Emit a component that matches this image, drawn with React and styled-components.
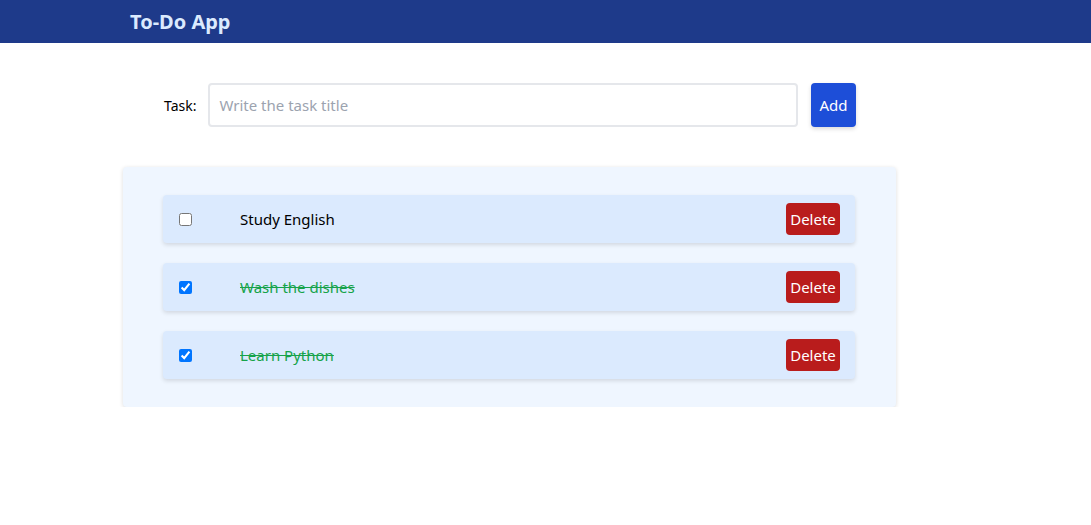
import React, { useState } from "react";
import styled, { createGlobalStyle } from "styled-components";

const GlobalStyle = createGlobalStyle`
    body {
        margin: 0;
        font-family: "Noto Sans", "Open Sans", sans-serif;
        background: #ffffff;
        color: #000000;
    }
    * { box-sizing: border-box; }
`;

const initialTasks = [
    { id: 1, title: "Study English", done: false },
    { id: 2, title: "Wash the dishes", done: true },
    { id: 3, title: "Learn Python", done: true },
];

const App = () => {
    const [tasks, setTasks] = useState(initialTasks);
    const [title, setTitle] = useState("");

    const toggle = (id) => setTasks(tasks.map((t) => (t.id === id ? { ...t, done: !t.done } : t)));
    const remove = (id) => setTasks(tasks.filter((t) => t.id !== id));
    const add = (e) => {
        e.preventDefault();
        if (!title.trim()) return;
        setTasks([...tasks, { id: Date.now(), title, done: false }]);
        setTitle("");
    };

    return (<>
        <GlobalStyle />
        <Header>
            <h1>To-Do App</h1>
        </Header>
        <Main>
            <Form onSubmit={add}>
                <label htmlFor="task">Task:</label>
                <input id="task" placeholder="Write the task title" value={title} onChange={(e) => setTitle(e.target.value)} />
                <AddButton type="submit">Add</AddButton>
            </Form>
            <Panel>
                {tasks.map((task) => (
                    <Item key={task.id}>
                        <input type="checkbox" checked={task.done} onChange={() => toggle(task.id)} />
                        <Title $done={task.done}>{task.title}</Title>
                        <DeleteButton onClick={() => remove(task.id)}>Delete</DeleteButton>
                    </Item>
                ))}
            </Panel>
        </Main>
        </>
    );
};

export default App;

const Header = styled.header`
    height: 43px;
    background: #1e3a8a;
    display: flex;
    align-items: center;
    padding-left: 130px;
    h1 {
        margin: 0;
        font-size: 20px;
        font-weight: 700;
        color: #dbeafe;
    }
`;

const Main = styled.main`
    width: 773px;
    margin-left: 123px;
    padding-top: 40px;
`;

const Form = styled.form`
    display: flex;
    align-items: center;
    padding: 0 40px 0 41px;
    margin-bottom: 40px;
    label {
        font-size: 14px;
        margin-right: 12px;
    }
    input {
        flex: 1;
        height: 44px;
        border: 2px solid #e5e7eb;
        border-radius: 4px;
        padding: 0 9px;
        font-family: inherit;
        font-size: 15px;
        outline: none;
        &::placeholder { color: #9ca3af; }
    }
`;

const AddButton = styled.button`
    margin-left: 13px;
    width: 45px;
    height: 44px;
    border: none;
    border-radius: 4px;
    background: #1d4ed8;
    color: #ffffff;
    font-family: inherit;
    font-size: 15px;
    box-shadow: 0 2px 4px rgba(0, 0, 0, 0.15);
    cursor: pointer;
`;

const Panel = styled.section`
    background: #eff6ff;
    border-radius: 4px;
    padding: 28px 41px 28px 40px;
    display: flex;
    flex-direction: column;
    gap: 20px;
    box-shadow: 0 1px 4px rgba(0, 0, 0, 0.14);
`;

const Item = styled.div`
    height: 48px;
    background: #dbeafe;
    border-radius: 4px;
    display: flex;
    align-items: center;
    padding: 0 15px 0 16px;
    box-shadow: 0 2px 4px rgba(0, 0, 0, 0.12);
    input {
        margin: 0;
        width: 13px;
        height: 13px;
    }
`;

const Title = styled.span`
    flex: 1;
    margin-left: 48px;
    font-size: 15px;
    color: ${(p) => (p.$done ? "#16a34a" : "#000000")};
    text-decoration: ${(p) => (p.$done ? "line-through" : "none")};
`;

const DeleteButton = styled.button`
    height: 32px;
    width: 54px;
    padding: 0;
    border: none;
    border-radius: 4px;
    background: #b91c1c;
    color: #ffffff;
    font-family: inherit;
    font-size: 15px;
    cursor: pointer;
`;
